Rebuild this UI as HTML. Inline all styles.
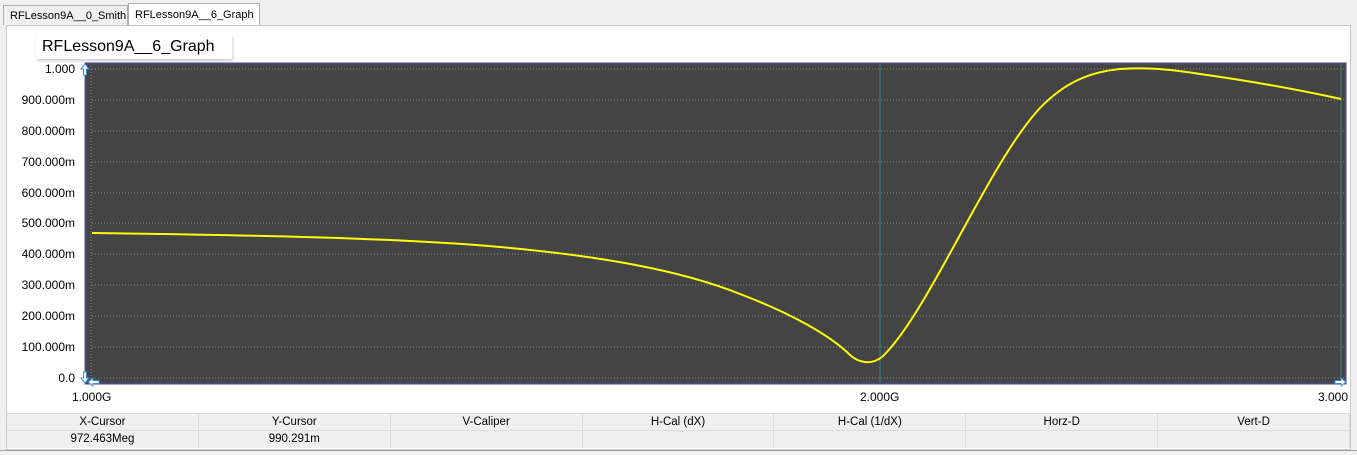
<!DOCTYPE html>
<html><head><style>
body{margin:0;width:1357px;height:454px;background:#f0f0f0;font-family:"Liberation Sans",sans-serif;position:relative;overflow:hidden}
.tab{position:absolute;font-size:11px;border:1px solid #adadad;border-bottom:none;padding:0 6px;box-sizing:border-box}
.panel{position:absolute;left:6px;top:25px;width:1345px;height:425px;border:1px solid #c8c8c8;background:#fff;box-sizing:border-box}
.yl{position:absolute;right:1282px;font-size:12px;color:#000}
.tbl{position:absolute;left:7px;width:1343px;height:17px;display:flex;font-size:11.5px;background:#f0f0f0}
.tbl div{flex:1;text-align:center;line-height:17px;border-right:1px solid #dcdcdc}
</style></head><body>
<div class="tab" style="left:3px;top:5px;width:125px;height:20px;line-height:20px;background:#f0f0f0">RFLesson9A__0_Smith</div>
<div class="tab" style="left:128px;top:3px;width:132px;height:23px;line-height:22px;background:#fff">RFLesson9A__6_Graph</div>
<div class="panel"></div>
<div style="position:absolute;left:0;top:450px;width:1357px;height:4px;background:#f0f0f0;border-top:1px solid #a0a0a0"></div>
<div style="position:absolute;left:36px;top:35px;width:190px;height:24px;font-size:16px;line-height:24px;padding-left:6px;box-shadow:1px 2px 3px rgba(0,0,0,.2);background:#fff">RFLesson9A__6_Graph</div>
<svg style="position:absolute;left:0;top:0" width="1357" height="454">
<rect x="85.5" y="63.5" width="1260" height="320" fill="#444" stroke="#4a4a7a" stroke-width="2"/>
<g stroke="#8a8a8a" stroke-dasharray="1,2" stroke-width="1">
<line x1="92" x2="1344" y1="100" y2="100"/><line x1="92" x2="1344" y1="131" y2="131"/><line x1="92" x2="1344" y1="162" y2="162"/><line x1="92" x2="1344" y1="193" y2="193"/><line x1="92" x2="1344" y1="223" y2="223"/><line x1="92" x2="1344" y1="254" y2="254"/><line x1="92" x2="1344" y1="285" y2="285"/><line x1="92" x2="1344" y1="316" y2="316"/><line x1="92" x2="1344" y1="347" y2="347"/><line x1="92" x2="1344" y1="378" y2="378"/><line x1="92" x2="1344" y1="69" y2="69"/>
<line x1="91" x2="91" y1="66" y2="382"/>
</g>
<line x1="880" x2="880" y1="64" y2="383" stroke="#2a8a8a"/>
<line x1="1341" x2="1341" y1="64" y2="383" stroke="#2a8a8a"/>
<path fill="none" stroke="#ffff00" stroke-width="2" d="M92,233 C250,235 400,238 500,247 C600,256 680,270 740,294 C790,313 830,335 850,355 C858,362 870,366 882,357 C905,335 930,290 960,235 C990,180 1015,135 1040,108 C1065,82 1090,72 1120,69 C1150,67 1175,70 1200,74 C1250,81 1300,90 1341,99"/>
<g fill="#fff" stroke="#3b8fd8" stroke-width="1">
<path d="M85,64 l-4,5 h2.5 v6 h3 v-6 h2.5z"/>
<path d="M85,383 l-4,-5 h2.5 v-6 h3 v6 h2.5z"/>
<path d="M88,382 l5,-4 v2.5 h6 v3 h-6 v2.5z"/>
<path d="M1346,382 l-5,-4 v2.5 h-6 v3 h6 v2.5z"/>
</g>
</svg>
<div class="yl" style="top:62px">1.000</div>
<div class="yl" style="top:93px">900.000m</div>
<div class="yl" style="top:124px">800.000m</div>
<div class="yl" style="top:155px">700.000m</div>
<div class="yl" style="top:186px">600.000m</div>
<div class="yl" style="top:216px">500.000m</div>
<div class="yl" style="top:247px">400.000m</div>
<div class="yl" style="top:278px">300.000m</div>
<div class="yl" style="top:309px">200.000m</div>
<div class="yl" style="top:340px">100.000m</div>
<div class="yl" style="top:371px">0.0</div>
<div style="position:absolute;left:72px;top:390px;font-size:12px">1.000G</div>
<div style="position:absolute;left:860px;top:390px;font-size:12px">2.000G</div>
<div style="position:absolute;left:1318px;top:390px;font-size:12px">3.000</div>
<div class="tbl" style="top:413px;border-top:1px solid #dcdcdc"><div>X-Cursor</div><div>Y-Cursor</div><div>V-Caliper</div><div>H-Cal (dX)</div><div>H-Cal (1/dX)</div><div>Horz-D</div><div>Vert-D</div></div>
<div class="tbl" style="top:430px;border-top:1px solid #dcdcdc"><div>972.463Meg</div><div>990.291m</div><div></div><div></div><div></div><div></div><div></div></div>
</body></html>
